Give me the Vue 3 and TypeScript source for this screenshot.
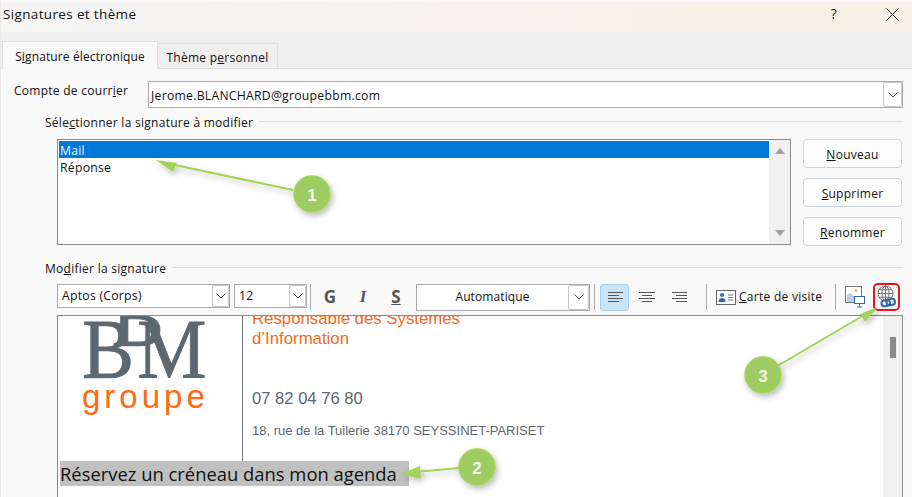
<script setup lang="ts">
interface Btn { key: string; after: string }
const buttons: Btn[] = [
  { key: 'N', after: 'ouveau' },
  { key: 'S', after: 'upprimer' },
  { key: 'R', after: 'enommer' },
]
const badges = [
  { c: 312, y: 194, t: '1' },
  { c: 477, y: 467, t: '2' },
  { c: 763, y: 375, t: '3' },
]
</script>

<template>
  <div class="app">
    <header class="titlebar">
      <span class="title">Signatures et thème</span>
      <span class="help">?</span>
      <svg class="close" width="13" height="13" viewBox="0 0 13 13"><path d="M.5.5 12.500 12.500M12.500.5.5 12.500" stroke="#222" stroke-width="1" fill="none" /></svg>
    </header>

    <nav class="tabs">
      <div class="tab active">S<u>i</u>gnature électronique</div>
      <div class="tab">Thème p<u>e</u>rsonnel</div>
    </nav>

    <main class="panel">
      <div class="account">
        <label class="account-label">Compte de courr<u>i</u>er</label>
        <div class="combo account-combo">
          <span class="combo-value">Jerome.BLANCHARD@groupebbm.com</span>
          <span class="combo-btn"><svg width="10" height="6" viewBox="0 0 10 6"><path d="M.5.5 5 5 9.500.5" stroke="#555" fill="none" /></svg></span>
        </div>
      </div>

      <div class="group first-group">
        <span>Séle<u>c</u>tionner la signature à modifier</span><i class="rule"></i>
      </div>

      <div class="sig-row">
        <div class="list">
          <div class="list-items">
            <div class="item selected">Mail</div>
            <div class="item">Réponse</div>
          </div>
          <div class="list-scroll">
            <i class="tri up"></i>
            <i class="tri down"></i>
          </div>
        </div>
        <div class="actions">
          <button v-for="b in buttons" :key="b.after" class="action"><u>{{ b.key }}</u>{{ b.after }}</button>
        </div>
      </div>

      <div class="group second-group">
        <span>Mo<u>d</u>ifier la signature</span><i class="rule"></i>
      </div>

      <div class="toolbar">
        <div class="combo font-combo">
          <span class="combo-value">Aptos (Corps)</span>
          <span class="combo-btn"><svg width="10" height="6" viewBox="0 0 10 6"><path d="M.5.5 5 5 9.500.5" stroke="#555" fill="none" /></svg></span>
        </div>
        <div class="combo size-combo">
          <span class="combo-value">12</span>
          <span class="combo-btn"><svg width="10" height="6" viewBox="0 0 10 6"><path d="M.5.5 5 5 9.500.5" stroke="#555" fill="none" /></svg></span>
        </div>
        <i class="sep sep-a"></i>
        <span class="fmt g">G</span>
        <span class="fmt it">I</span>
        <span class="fmt s">S</span>
        <div class="combo color-combo">
          <span class="combo-value centered">Automatique</span>
          <span class="combo-btn"><svg width="10" height="6" viewBox="0 0 10 6"><path d="M.5.5 5 5 9.500.5" stroke="#555" fill="none" /></svg></span>
        </div>
        <i class="sep sep-b"></i>
        <span class="align on">
          <svg width="16" height="11" viewBox="0 0 16 11"><path d="M1 .5h15M1 3.500h11M1 6.500h15M1 9.500h11" stroke="#555" fill="none" /></svg>
        </span>
        <span class="align">
          <svg width="16" height="11" viewBox="0 0 16 11"><path d="M0 .5h16M3 3.500h10M0 6.500h16M3 9.500h10" stroke="#555" fill="none" /></svg>
        </span>
        <span class="align">
          <svg width="16" height="11" viewBox="0 0 16 11"><path d="M1 .5h15M5 3.500h11M1 6.500h15M5 9.500h11" stroke="#555" fill="none" /></svg>
        </span>
        <i class="sep sep-c"></i>
        <svg class="card-ico" width="20" height="15" viewBox="0 0 20 15">
          <rect x=".5" y=".5" width="19" height="14" fill="#fff" stroke="#666" />
          <circle cx="6" cy="5" r="2" fill="#2f6aa8" />
          <path d="M2.500 12c0-3 1.500-4 3.500-4s3.500 1 3.500 4z" fill="#2f6aa8" />
          <path d="M12 5h5M12 7.500h5M12 10h5" stroke="#777" fill="none" />
        </svg>
        <span class="card-label"><u>C</u>arte de visite</span>
        <i class="sep sep-d"></i>
        <svg class="pic-ico" width="20" height="22" viewBox="0 0 20 22">
          <rect x=".5" y=".5" width="16" height="16" fill="#fff" stroke="#777" />
          <path d="M2 16V9l3-2 4 3v6z" fill="#bcd0e6" />
          <circle cx="11" cy="4.500" r="1.500" fill="#eeb46a" />
          <rect x="9.500" y="10.500" width="10" height="7" fill="#fff" stroke="#2f6aa8" />
          <path d="M14.500 18v2.500M12 21h5" stroke="#2f6aa8" fill="none" />
        </svg>
        <span class="link-btn">
          <svg width="21" height="24" viewBox="0 0 21 24">
            <g fill="none" stroke="#666" stroke-width=".9">
              <circle cx="9.500" cy="8.500" r="7.500" />
              <ellipse cx="9.500" cy="8.500" rx="3.500" ry="7.500" />
              <path d="M2 8.500h15M3 4.700h13M3 12.300h13M9.500 1v15" />
            </g>
            <g fill="none" stroke="#2f6aa8" stroke-width="2">
              <rect x="5.500" y="15" width="8.500" height="6" rx="3" transform="rotate(-12 10 18)" />
              <rect x="10.500" y="14" width="8.500" height="6" rx="3" transform="rotate(-12 15 17)" />
            </g>
          </svg>
        </span>
      </div>

      <section class="editor">
        <div class="sheet">
          <div class="sig-table">
            <div class="logo-cell">
              <div class="logo-mark">
                <span class="lt">B</span><span class="lt raised">B</span><span class="lt">M</span>
              </div>
              <div class="logo-word">groupe</div>
            </div>
            <div class="info-cell">
              <div class="role">Responsable des Systèmes<br />d’Information</div>
              <div class="phone">07 82 04 76 80</div>
              <div class="address">18, rue de la Tuilerie 38170 SEYSSINET-PARISET</div>
            </div>
          </div>
          <div class="agenda"><span>Réservez un créneau dans mon agenda</span></div>
        </div>
        <div class="editor-scroll"><i class="thumb"></i></div>
      </section>
    </main>

    <svg class="notes" width="912" height="497" viewBox="0 0 912 497">
      <defs>
        <filter id="sh" x="-30%" y="-30%" width="170%" height="170%">
          <feDropShadow dx="2" dy="3" stdDeviation="3" flood-color="#000" flood-opacity=".28" />
        </filter>
      </defs>
      <g filter="url(#sh)">
        <path d="M293 190 170 164" stroke="#a3d25a" stroke-width="2" fill="none" />
        <path d="M156 160 177 163 173 172z" fill="#a3d25a" />
        <path d="M459 468 415 472" stroke="#a3d25a" stroke-width="2" fill="none" />
        <path d="M401 474 420 466 421 479z" fill="#a3d25a" />
        <path d="M779 365 866 314" stroke="#a3d25a" stroke-width="2" fill="none" />
        <path d="M878 307 860 314 865 322z" fill="#a3d25a" />
      </g>
      <g v-for="n in badges" :key="n.t">
        <circle :cx="n.c" :cy="n.y" r="18" fill="#9ecb62" stroke="#a6d45c" stroke-width="1.500" filter="url(#sh)" />
        <text :x="n.c" :y="n.y + 6.500" text-anchor="middle" class="badge-t">{{ n.t }}</text>
      </g>
    </svg>
  </div>
</template>

<style scoped>
.app {
  position: relative;
  width: 912px;
  height: 497px;
  overflow: hidden;
  display: flex;
  flex-direction: column;
  background: #f9f9f9;
  color: #111;
  font: 12px/16px "Open Sans", "Noto Sans", sans-serif;
  letter-spacing: 0.27px;
  box-sizing: border-box;
  border-left: 1px solid #e8e8e8;
}
.titlebar {
  height: 30px;
  margin-top: 2px;
  margin-left: -1px;
  flex: none;
  display: flex;
  align-items: center;
  box-sizing: border-box;
  padding: 0 13px 6px 3px;
  background: linear-gradient(90deg, #f5f5f5 0%, #f6f4f2 35%, #f9f1e9 70%, #f9f0e8 100%);
}
.title { font-size: 13.500px; flex: 1; letter-spacing: .35px; }
.help { font-size: 14px; margin-right: 49px; }
.tabs {
  height: 37px;
  flex: none;
  margin-left: -1px;
  display: flex;
  align-items: flex-end;
  padding-left: 2px;
  background: #efefef;
  border-bottom: 1px solid #dedede;
  box-sizing: border-box;
}
.tab {
  height: 25px;
  width: 120px;
  box-sizing: border-box;
  text-align: center;
  line-height: 27px;
  border: 1px solid #e0e0e0;
  border-bottom: none;
  border-left: none;
}
.tab.active {
  width: 156px;
  height: 28px;
  line-height: 30px;
  margin-bottom: -1px;
  background: #f9f9f9;
  border-left: 1px solid #e0e0e0;
  letter-spacing: .12px;
}
.panel {
  flex: 1;
  min-height: 0;
  display: flex;
  flex-direction: column;
  padding: 12px 9px 0 13px;
}
.account { display: flex; align-items: flex-start; }
.account-label { width: 134px; flex: none; margin-top: 2px; }
.combo {
  height: 27px;
  box-sizing: border-box;
  display: flex;
  align-items: center;
  background: #fff;
  border: 1px solid #aaa;
}
.account-combo { flex: 1; }
.combo-value { flex: 1; padding-left: 2px; font-size: 12.200px; line-height: 18px; white-space: nowrap; }
.account-combo .combo-value { padding-top: 2px; }
.combo-value.centered { text-align: center; padding-left: 0; font-size: 12px; letter-spacing: .1px; }
.combo-btn {
  width: 19px;
  height: 100%;
  box-sizing: border-box;
  display: flex;
  align-items: center;
  justify-content: center;
  border: 1px solid #c9c9c9;
  border-radius: 2px;
  flex: none;
}
.group {
  display: flex;
  align-items: center;
  padding-left: 31px;
  height: 16px;
}
.group span { padding-top: 2px; }
.first-group { margin-top: 6px; }
.second-group { margin-top: 14px; }
.rule { flex: 1; height: 1px; margin: 0 0 2px 6px; background: #dcdcdc; }
.sig-row { display: flex; margin-top: 9px; padding-left: 43px; gap: 12px; }
.list {
  width: 734px;
  height: 106px;
  box-sizing: border-box;
  display: flex;
  background: #fff;
  border: 1px solid #868a8e;
  padding: 1px 0 1px 1px;
}
.list-items { flex: 1; }
.item { height: 17px; padding-left: 1px; line-height: 19px; font-size: 12.200px; }
.item.selected { background: #0078d7; color: #e8f2fb; }
.list-scroll {
  width: 21px;
  margin: -1px 0;
  background: #f0f0f0;
  display: flex;
  flex-direction: column;
  align-items: center;
  justify-content: space-between;
  padding: 8px 0;
  box-sizing: border-box;
}
.tri { width: 0; height: 0; border-left: 5px solid transparent; border-right: 5px solid transparent; }
.tri.up { border-bottom: 6px solid #a0a0a0; }
.tri.down { border-top: 6px solid #a0a0a0; }
.actions { width: 99px; display: flex; flex-direction: column; gap: 10px; }
.action {
  height: 29px;
  padding: 3px 0 0;
  font: inherit;
  letter-spacing: inherit;
  color: inherit;
  background: #fdfdfd;
  border: 1px solid #cfd4da;
  border-radius: 4px;
}
.toolbar {
  display: flex;
  align-items: center;
  height: 28px;
  margin-top: 7px;
  padding-left: 43px;
}
.font-combo { width: 173px; height: 24px; margin-bottom: 2px; }
.font-combo .combo-value, .size-combo .combo-value { padding-left: 4px; }
.size-combo { width: 73px; height: 24px; margin: 0 0 2px 4px; }
.font-combo .combo-btn, .size-combo .combo-btn { width: 17px; }
.sep { width: 1px; height: 26px; background: #aaa; flex: none; }
.sep-a { margin-left: 3px; }
.fmt { color: #555; font: bold 17px/20px "Open Sans", sans-serif; text-align: center; letter-spacing: 0; }
.fmt.g { width: 18px; margin-left: 10px; }
.fmt.it { width: 18px; margin-left: 15px; font-style: italic; font-family: "Liberation Serif", serif; }
.fmt.s { width: 18px; margin-left: 15px; text-decoration: underline; }
.color-combo { width: 174px; margin: 0 0 0 11px; }
.color-combo .combo-btn { width: 21px; }
.sep-b { margin-left: 4px; }
.align {
  width: 29px;
  height: 27px;
  display: flex;
  align-items: center;
  justify-content: center;
  box-sizing: border-box;
  flex: none;
}
.align.on { margin-left: 5px; background: #cce4f7; border: 1px solid #9fd0f5; border-radius: 3px; }
.align + .align { margin-left: 3px; }
.sep-c { margin-left: 13px; }
.card-ico { margin-left: 9px; flex: none; }
.card-label { margin-left: 3px; white-space: nowrap; }
.sep-d { margin-left: 13px; }
.pic-ico { margin-left: 9px; flex: none; }
.link-btn {
  width: 27px;
  height: 28px;
  box-sizing: border-box;
  margin-left: 8px;
  flex: none;
  display: flex;
  align-items: center;
  justify-content: center;
  border: 2px solid #e8141c;
  border-radius: 5px;
}
.editor {
  flex: 1;
  min-height: 0;
  margin: 4px 0 0 43px;
  display: flex;
  background: #fff;
  border: 1px solid #868a8e;
  border-bottom: none;
  overflow: hidden;
}
.sheet { flex: 1; min-width: 0; overflow: hidden; font-family: "Liberation Sans", sans-serif; letter-spacing: 0; }
.sig-table { display: flex; height: 145px; }
.logo-cell {
  width: 185px;
  flex: none;
  box-sizing: border-box;
  border-right: 1px solid #6f7478;
  padding-left: 24px;
  overflow: hidden;
}
.logo-mark {
  display: flex;
  height: 58px;
  margin-top: -4px;
  color: #5c6871;
  font: 84px/76px "Liberation Serif", serif;
  letter-spacing: 0;
  -webkit-text-stroke: .8px #5c6871;
  transform: scaleX(.93);
  transform-origin: left center;
}
.lt { display: block; }
.raised { margin: 0 -29px 0 -24px; transform: translateY(-32px); }
.logo-word {
  margin-top: 8px;
  color: #ff6a13;
  font: 33px/38px "Liberation Sans", sans-serif;
  letter-spacing: 4px;
}
.info-cell { flex: 1; padding-left: 9px; margin-top: -7px; }
.role { color: #f26a21; font-size: 16.800px; line-height: 19.500px; white-space: nowrap; }
.phone { color: #5b6670; font-size: 16.600px; line-height: 20px; margin-top: 41px; }
.address { color: #5b6670; font-size: 13px; line-height: 16px; margin-top: 14px; white-space: nowrap; }
.agenda {
  padding-left: 2px;
  font: 18.400px/25px "Open Sans", "Noto Sans", sans-serif;
  color: #111;
}
.agenda span { display: inline-block; background: #c0c0c0; padding-right: 12px; white-space: nowrap; }
.editor-scroll {
  width: 19px;
  flex: none;
  background: #f0f0f0;
  display: flex;
  justify-content: center;
  padding-top: 21px;
  box-sizing: border-box;
}
.thumb { display: block; width: 6px; height: 21px; background: #8a8a8a; }
.notes { position: absolute; left: -1px; top: 0; pointer-events: none; }
.badge-t { font: bold 17px "Liberation Sans", sans-serif; fill: #f2f7ea; }
</style>
